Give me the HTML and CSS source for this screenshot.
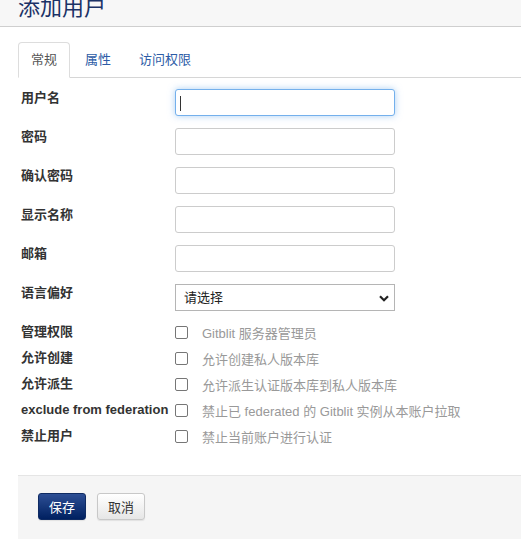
FILE: index.html
```html
<!DOCTYPE html>
<html lang="zh-CN">
<head>
<meta charset="utf-8">
<title>添加用户</title>
<link rel="stylesheet" href="styles.css">
</head>
<body>
<header class="page-header">
  <h1 class="title">添加用户</h1>
</header>
<main class="content">
  <ul class="tabs">
    <li class="tab active"><a>常规</a></li>
    <li class="tab"><a>属性</a></li>
    <li class="tab"><a>访问权限</a></li>
  </ul>
  <form class="form">
    <div class="row">
      <label class="label">用户名</label>
      <div class="field focused"><input class="input focus" type="text"><span class="caret"></span></div>
    </div>
    <div class="row">
      <label class="label">密码</label>
      <div class="field"><input class="input" type="password"></div>
    </div>
    <div class="row">
      <label class="label">确认密码</label>
      <div class="field"><input class="input" type="password"></div>
    </div>
    <div class="row">
      <label class="label">显示名称</label>
      <div class="field"><input class="input" type="text"></div>
    </div>
    <div class="row">
      <label class="label">邮箱</label>
      <div class="field"><input class="input" type="text"></div>
    </div>
    <div class="row">
      <label class="label">语言偏好</label>
      <div class="field select-wrap">
        <select class="select"><option>请选择</option></select>
        <svg class="chevron" width="10" height="7" viewBox="0 0 10 7"><path d="M1 1.2 L5 5.2 L9 1.2" fill="none" stroke="#222" stroke-width="2.2"/></svg>
      </div>
    </div>
    <div class="checks">
      <div class="check-row">
        <label class="label">管理权限</label>
        <span class="box"></span><span class="desc">Gitblit 服务器管理员</span>
      </div>
      <div class="check-row">
        <label class="label">允许创建</label>
        <span class="box"></span><span class="desc">允许创建私人版本库</span>
      </div>
      <div class="check-row">
        <label class="label">允许派生</label>
        <span class="box"></span><span class="desc">允许派生认证版本库到私人版本库</span>
      </div>
      <div class="check-row">
        <label class="label">exclude from federation</label>
        <span class="box"></span><span class="desc">禁止已 federated 的 Gitblit 实例从本账户拉取</span>
      </div>
      <div class="check-row">
        <label class="label">禁止用户</label>
        <span class="box"></span><span class="desc">禁止当前账户进行认证</span>
      </div>
    </div>
    <div class="actions">
      <button type="button" class="btn primary">保存</button>
      <button type="button" class="btn">取消</button>
    </div>
  </form>
</main>
</body>
</html>
```
FILE: styles.css
```css
html, body {
  margin: 0;
  padding: 0;
  background: #fff;
}
body {
  font-family: "Liberation Sans", "Noto Sans CJK SC", sans-serif;
  font-size: 13px;
  color: #333;
  overflow: hidden;
}
.page-header {
  height: 26px;
  background: #f7f7f7;
  border-bottom: 1px solid #cfcfcf;
  padding-left: 18px;
  overflow: hidden;
}
.title {
  margin: -5px 0 0 0;
  font-size: 22px;
  line-height: 26px;
  font-weight: normal;
  color: #1b3266;
}
.content {
  padding-left: 18px;
}
.tabs {
  list-style: none;
  margin: 15px 0 0 0;
  padding: 0;
  display: flex;
  border-bottom: 1px solid #d6d6d6;
}
.tab {
  margin-right: 2px;
  margin-bottom: -1px;
}
.tab a {
  display: block;
  padding: 8px 12px;
  line-height: 18px;
  border: 1px solid transparent;
  border-radius: 4px 4px 0 0;
  color: #2d5ca6;
}
.tab.active a {
  color: #555;
  background: #fff;
  border-color: #ddd;
  border-bottom-color: #fff;
}
.form {
  padding-top: 11px;
}
.row {
  display: flex;
  align-items: flex-start;
  height: 27px;
  margin-bottom: 12px;
}
.label {
  width: 154px;
  padding-left: 3px;
  flex: none;
  font-weight: bold;
  line-height: 18px;
  color: #333;
}
.field {
  position: relative;
  width: 220px;
  height: 27px;
}
.input {
  box-sizing: border-box;
  width: 220px;
  height: 27px;
  margin: 0;
  border: 1px solid #ccc;
  border-radius: 3px;
  background: #fff;
  outline: none;
  font: inherit;
}
.input.focus {
  border-color: #74b0ec;
  box-shadow: 0 0 7px rgba(102, 170, 235, 0.55);
}
.caret {
  position: absolute;
  left: 5px;
  top: 7px;
  width: 1px;
  height: 15px;
  background: #333;
}
.select-wrap {
  position: relative;
}
.select {
  -webkit-appearance: none;
  appearance: none;
  box-sizing: border-box;
  width: 220px;
  height: 27px;
  margin: 0;
  padding: 0 0 0 8px;
  border: 1px solid #b5b5b5;
  border-radius: 0;
  background: #fff;
  font: inherit;
  color: #222;
  outline: none;
}
.chevron {
  position: absolute;
  right: 6px;
  top: 11px;
  pointer-events: none;
}
.checks {
  margin-top: -4px;
}
.check-row {
  display: flex;
  align-items: center;
  height: 26px;
}
.box {
  box-sizing: border-box;
  width: 13px;
  height: 13px;
  border: 1px solid #767676;
  border-radius: 2px;
  background: #fff;
  flex: none;
}
.desc {
  margin-left: 14px;
  color: #999;
  white-space: nowrap;
}
.actions {
  margin-top: 26px;
  height: 64px;
  box-sizing: border-box;
  padding: 17px 0 0 20px;
  background: #f5f5f5;
  border-top: 1px solid #e5e5e5;
  display: flex;
  align-items: flex-start;
  gap: 11px;
}
.btn {
  height: 27px;
  padding: 0 10px;
  font: inherit;
  color: #333;
  border: 1px solid #c8c8c8;
  border-radius: 3px;
  background: linear-gradient(#ffffff, #e6e6e6);
  box-shadow: 0 1px 1px rgba(0, 0, 0, 0.08);
}
.btn.primary {
  color: #fff;
  border-color: #0f2b63;
  background: linear-gradient(#2d4f95, #002060);
}
```
